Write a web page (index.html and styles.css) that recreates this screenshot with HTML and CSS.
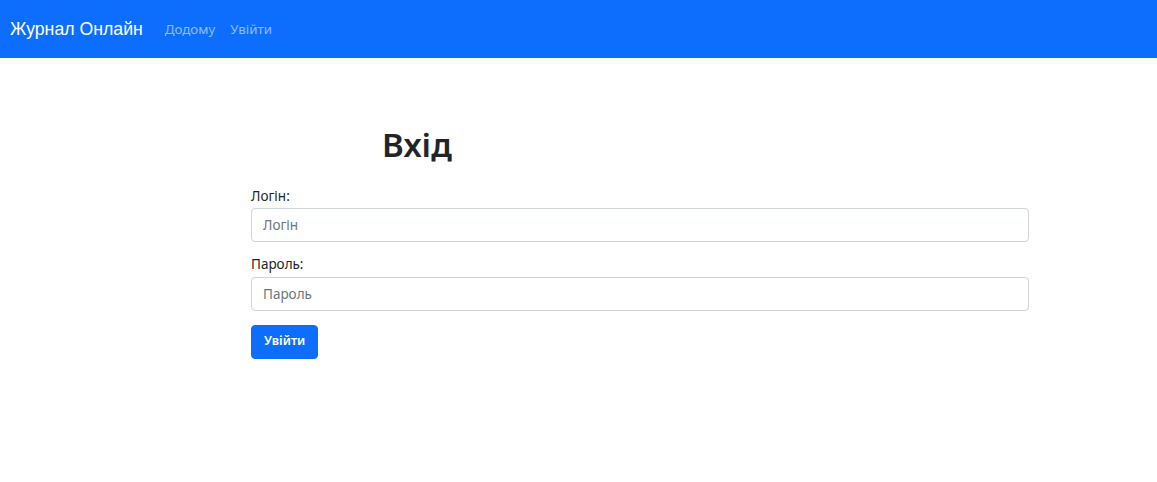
FILE: index.html
```html
<!DOCTYPE html>
<html lang="uk">
<head>
<meta charset="utf-8">
<title>Журнал Онлайн</title>
<link rel="stylesheet" href="styles.css">
</head>
<body>
<nav class="navbar">
  <a class="brand" href="#">Журнал Онлайн</a>
  <ul class="nav">
    <li><a class="nav-link" href="#">Додому</a></li>
    <li><a class="nav-link" href="#">Увійти</a></li>
  </ul>
</nav>
<main class="page">
  <div class="login">
    <h1 class="title">Вхід</h1>
    <form class="form">
      <div class="field">
        <label class="label" for="login">Логін:</label>
        <input class="input" id="login" type="text" placeholder="Логін">
      </div>
      <div class="field">
        <label class="label" for="password">Пароль:</label>
        <input class="input" id="password" type="password" placeholder="Пароль">
      </div>
      <button class="btn" type="submit">Увійти</button>
    </form>
  </div>
</main>
</body>
</html>
```
FILE: styles.css
```css
* { box-sizing: border-box; }
html, body { margin: 0; padding: 0; }
body {
  font-family: "Noto Sans", "Open Sans", sans-serif;
  font-size: 14px;
  line-height: 1.5;
  color: #212529;
  background: #fff;
}
.navbar {
  height: 58px;
  background: #0d6efd;
  display: flex;
  align-items: center;
  padding: 0 10px;
}
.brand {
  color: #fff;
  text-decoration: none;
  font-family: "Liberation Sans", Arial, sans-serif;
  font-size: 17.7px;
  margin-right: 22px;
}
.nav {
  list-style: none;
  margin: 0;
  padding: 0;
  display: flex;
  gap: 15px;
}
.nav-link {
  color: rgba(255,255,255,.55);
  text-decoration: none;
  font-size: 13.3px;
}
.page {
  display: flex;
  justify-content: flex-start;
  padding: 65px 0 0 251px;
}
.login {
  width: 778px;
}
.title {
  margin: 0 0 19px 131px;
  font-size: 33px;
  font-weight: 600;
  line-height: 44px;
}
.form {
  display: flex;
  flex-direction: column;
  align-items: flex-start;
}
.field {
  width: 100%;
  margin-bottom: 12px;
}
.label {
  display: block;
  margin-bottom: 2px;
  font-size: 13.5px;
}
.input {
  display: block;
  width: 100%;
  height: 34px;
  padding: 6px 11px;
  font: inherit;
  font-size: 13.5px;
  color: #212529;
  border: 1px solid #ced4da;
  border-radius: 4px;
}
.input::placeholder { color: #6c757d; }
.btn {
  height: 34px;
  margin-top: 2px;
  padding: 0 12px;
  font: inherit;
  font-size: 12.5px;
  font-weight: 600;
  color: #fff;
  background: #0d6efd;
  border: 1px solid #0d6efd;
  border-radius: 4px;
}
```
